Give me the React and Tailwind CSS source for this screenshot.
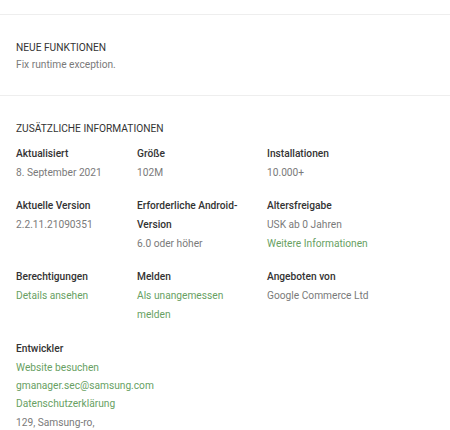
import React from 'react'

const font = { fontFamily: 'Roboto, "Liberation Sans", sans-serif' }

const rows = [
  [
    { label: 'Aktualisiert', lines: [{ t: '8. September 2021' }] },
    { label: 'Größe', lines: [{ t: '102M' }] },
    { label: 'Installationen', lines: [{ t: '10.000+' }] },
  ],
  [
    { label: 'Aktuelle Version', lines: [{ t: '2.2.11.21090351' }] },
    { label: 'Erforderliche Android-Version', lines: [{ t: '6.0 oder höher' }] },
    { label: 'Altersfreigabe', lines: [{ t: 'USK ab 0 Jahren' }, { t: 'Weitere Informationen', link: true }] },
  ],
  [
    { label: 'Berechtigungen', lines: [{ t: 'Details ansehen', link: true }] },
    { label: 'Melden', lines: [{ t: 'Als unangemessen melden', link: true }] },
    { label: 'Angeboten von', lines: [{ t: 'Google Commerce Ltd' }] },
  ],
]

const InfoCell = ({ label, lines }) => (
  <div className="pr-[16px]">
    <div className="text-[10.2px] leading-[19px] font-medium text-[#333333]">{label}</div>
    {lines.map((l, i) => (
      <div
        key={i}
        className={`text-[10.2px] leading-[19px] ${l.link ? 'text-[#689f63]' : 'text-[#7a7a7a]'}`}
      >
        {l.t}
      </div>
    ))}
  </div>
)

export default function App() {
  return (
    <div className="w-[450px] h-[430px] overflow-hidden bg-white" style={font}>
      <div className="h-[15px] border-b border-[#eeeeee]" />

      <section className="px-[16px] pt-[24px] pb-[22px] border-b border-[#eeeeee]">
        <h2 className="text-[10.2px] leading-[17px] text-[#333333] uppercase">Neue Funktionen</h2>
        <p className="text-[10.2px] leading-[17px] text-[#7a7a7a]">Fix runtime exception.</p>
      </section>

      <section className="px-[16px] pt-[24px]">
        <h2 className="text-[10.2px] leading-[17px] text-[#333333] uppercase mb-[7px]">
          Zusätzliche Informationen
        </h2>
        <div className="flex flex-col gap-[14px]">
          {rows.map((row, r) => (
            <div key={r} className="grid grid-cols-[121px_130px_1fr]">
              {row.map((c, i) => (
                <InfoCell key={i} {...c} />
              ))}
            </div>
          ))}
          <div className="pt-[1px]">
            <div className="text-[10.2px] leading-[19px] font-medium text-[#333333]">Entwickler</div>
            <div className="text-[10.2px] leading-[19px] text-[#689f63]">Website besuchen</div>
            {['gmanager.sec@samsung.com', 'Datenschutzerklärung'].map((t) => (
              <div key={t} className="text-[10.2px] leading-[18px] text-[#689f63]">{t}</div>
            ))}
            <div className="text-[10.2px] leading-[19px] text-[#7a7a7a]">129, Samsung-ro,</div>
          </div>
        </div>
      </section>
    </div>
  )
}
